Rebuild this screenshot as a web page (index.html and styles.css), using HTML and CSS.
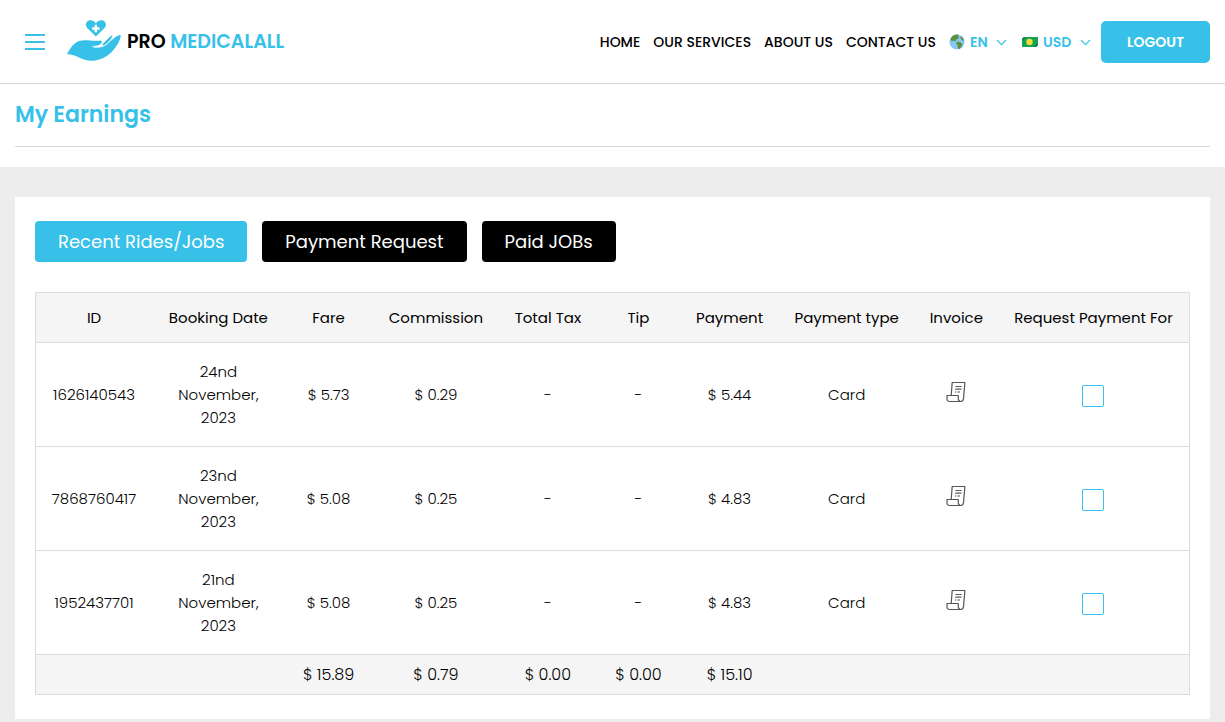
FILE: index.html
```
<!DOCTYPE html>
<html lang="en">
<head>
    <meta charset="UTF-8">
    <meta name="viewport" content="width=device-width, initial-scale=1.0">
    <title>My Earnings</title>
    <link rel="stylesheet" href="styles.css">
</head>
<body>
    <!-- icons used more than once -->
    <svg class="sprite" aria-hidden="true">
        <symbol id="icon-chevron" viewBox="0 0 10 7">
            <path d="M.5 1 5 5.600 9.500 1" fill="none" stroke="currentColor" stroke-width="1.2"/>
        </symbol>
        <symbol id="icon-invoice" viewBox="0 0 20 22">
            <path d="M5.200 14.500 6.200 1.500H18.900L17.500 17.500c-.2 2-1.100 3-2.700 3H3.700c-1.800 0-2.700-.9-2.700-2.500v-3.500h11.300v3.300c0 1.700.9 2.700 2.500 2.700" fill="none" stroke="currentColor" stroke-width="1.200" stroke-linejoin="round"/>
            <path d="M9.500 5.500h6M9.300 8.200h6M9 11h1.200M11.300 11h2.700" fill="none" stroke="currentColor" stroke-width="1.200"/>
        </symbol>
    </svg>

    <header class="header">
        <button class="menu-btn" aria-label="Menu"><span></span><span></span><span></span></button>
        <a class="logo" href="#">
            <svg class="logo-mark" viewBox="0 0 54 44" aria-hidden="true">
                <path d="M28.800 16.500 20.500 8.300C16.500 4 20.500-1 25 .5c2 .5 2.800 1.600 3.800 2.700 1-1.100 2-2.200 4-2.700 4.500-1.500 8.500 3.500 4.500 7.800z" fill="#38c1e8"/>
                <path d="M27.600 4.800h2.400v2.500h2.500v2.400h-2.500v2.500h-2.400V9.700h-2.500V7.300h2.500z" fill="#fff"/>
                <path d="M0 34C3 29 6 23 12 21c7-2.300 13 1 22-.6 2.500 1.600-.6 4.600-3.500 5.100l-5.500.8c5.500 1.700 11 .6 15-2.300C44.500 21 49 15 53.500 15c1 2-2 8.500-5.500 13-5 7-12 11.500-21 12.700C16 42 10 34.500 0 34z" fill="#38c1e8"/>
                <path d="M34.500 25c3-1.700 6.500-7.500 11-10-1 4.200-3 7.700-8 10.200z" fill="#38c1e8"/>
                <path d="M25.500 26.700c5.500 1.300 11 .2 14.800-3.200l6.500-6.800" fill="none" stroke="#fff" stroke-width="1"/>
            </svg>
            <span class="logo-text">PRO <span>MEDICALALL</span></span>
        </a>

        <nav class="nav">
            <a href="#">HOME</a>
            <a href="#">OUR SERVICES</a>
            <a href="#">ABOUT US</a>
            <a href="#">CONTACT US</a>
        </nav>
        <div class="pickers">
            <label class="picker">
                <svg class="globe" viewBox="0 0 16 16" aria-hidden="true">
                    <circle cx="8" cy="8" r="7.500" fill="#88c9f9"/>
                    <path d="M2 4C4 .8 7.500.2 9.500.800L9 2.500l1.500.5L8.500 5 7 5.500l-.5 2L4.500 6.500 3 7.200 1.500 6zM8 7.500l3 .5 2.500 2-1 2.500-2 2.500-1.500-.5L8.500 11 7 9.500zM12 2.300l2 1.700 1.200 3-1.700-.5-1.500-1.500-.8-1.500z" fill="#5c913b"/>
                </svg>
                <select aria-label="Language"><option>EN</option></select>
                <svg class="chevron"><use href="#icon-chevron"/></svg>
            </label>
            <label class="picker">
                <svg class="money" viewBox="0 0 16 10" aria-hidden="true">
                    <path d="M2 0h14v8l-2 2H0V2z" fill="#12a455"/>
                    <path d="M2 0h2L0 4V2zM16 6v2l-2 2h-2z" fill="#087d3d"/>
                    <circle cx="7.500" cy="5" r="3.200" fill="#fdd835"/>
                </svg>
                <select aria-label="Currency"><option>USD</option></select>
                <svg class="chevron"><use href="#icon-chevron"/></svg>
            </label>
        </div>
        <button class="logout-btn">LOGOUT</button>
    </header>

    <section class="page-title">
        <h1>My Earnings</h1>
    </section>

    <main class="content">
        <div class="panel">
            <div class="tabs">
                <button class="tab active">Recent Rides/Jobs</button>
                <button class="tab">Payment Request</button>
                <button class="tab">Paid JOBs</button>
            </div>

            <table class="earnings">
                <colgroup>
                    <col class="col-id">
                    <col class="col-date">
                    <col class="col-fare">
                    <col class="col-commission">
                    <col class="col-tax">
                    <col class="col-tip">
                    <col class="col-payment">
                    <col class="col-type">
                    <col class="col-invoice">
                    <col class="col-request">
                </colgroup>
                <thead>
                    <tr>
                        <th>ID</th>
                        <th>Booking Date</th>
                        <th>Fare</th>
                        <th>Commission</th>
                        <th>Total Tax</th>
                        <th>Tip</th>
                        <th>Payment</th>
                        <th>Payment type</th>
                        <th>Invoice</th>
                        <th>Request Payment For</th>
                    </tr>
                </thead>
                <tbody>
                    <tr>
                        <td>1626140543</td>
                        <td>24nd November, 2023</td>
                        <td>$ 5.73</td>
                        <td>$ 0.29</td>
                        <td>-</td>
                        <td>-</td>
                        <td>$ 5.44</td>
                        <td>Card</td>
                        <td><a class="invoice" href="#" aria-label="Invoice"><svg><use href="#icon-invoice"/></svg></a></td>
                        <td><input type="checkbox" aria-label="Request payment for 1626140543"></td>
                    </tr>
                    <tr>
                        <td>7868760417</td>
                        <td>23nd November, 2023</td>
                        <td>$ 5.08</td>
                        <td>$ 0.25</td>
                        <td>-</td>
                        <td>-</td>
                        <td>$ 4.83</td>
                        <td>Card</td>
                        <td><a class="invoice" href="#" aria-label="Invoice"><svg><use href="#icon-invoice"/></svg></a></td>
                        <td><input type="checkbox" aria-label="Request payment for 7868760417"></td>
                    </tr>
                    <tr>
                        <td>1952437701</td>
                        <td>21nd November, 2023</td>
                        <td>$ 5.08</td>
                        <td>$ 0.25</td>
                        <td>-</td>
                        <td>-</td>
                        <td>$ 4.83</td>
                        <td>Card</td>
                        <td><a class="invoice" href="#" aria-label="Invoice"><svg><use href="#icon-invoice"/></svg></a></td>
                        <td><input type="checkbox" aria-label="Request payment for 1952437701"></td>
                    </tr>
                </tbody>
                <tfoot>
                    <tr>
                        <td></td>
                        <td></td>
                        <td>$ 15.89</td>
                        <td>$ 0.79</td>
                        <td>$ 0.00</td>
                        <td>$ 0.00</td>
                        <td>$ 15.10</td>
                        <td></td>
                        <td></td>
                        <td></td>
                    </tr>
                </tfoot>
            </table>
        </div>
    </main>
</body>
</html>
```

FILE: styles.css
```
* {
    box-sizing: border-box;
}
body {
    margin: 0;
    font-family: Poppins, Inter, sans-serif;
    font-size: 15px;
    line-height: 23px;
    color: #000;
    background-color: #ededed;
}
a {
    color: inherit;
    text-decoration: none;
}
button, select {
    font-family: inherit;
    cursor: pointer;
}
.sprite {
    display: none;
}

/* Header */
.header {
    display: flex;
    align-items: center;
    padding: 21px 15px 20px 25px;
    background-color: #fff;
    border-bottom: 1px solid #d9d9d9;
}
.menu-btn {
    display: flex;
    flex-direction: column;
    gap: 5px;
    width: 20px;
    padding: 0;
    border: none;
    background: none;
}
.menu-btn span {
    height: 2px;
    background-color: #38c1e8;
}
.logo {
    display: flex;
    align-items: center;
    gap: 6px;
    height: 42px;
    margin-left: 22px;
}
.logo-mark {
    width: 54px;
    height: 44px;
}
.logo-text {
    padding-bottom: 2px;
    font-size: 19px;
    font-weight: 600;
}
.logo-text span {
    color: #38c1e8;
}
.nav {
    display: flex;
    gap: 13px;
    margin-left: auto;
    font-size: 14px;
    font-weight: 500;
}
.pickers {
    display: flex;
    gap: 15px;
    margin: 0 10px 0 13px;
}
.picker {
    display: flex;
    align-items: center;
    color: #38c1e8;
}
.picker select {
    appearance: none;
    padding: 0 0 0 5px;
    border: none;
    background: none;
    color: inherit;
    font-size: 14px;
    font-weight: 600;
}
.globe, .money {
    width: 16px;
    height: 16px;
}
.money {
    height: 10px;
}
.chevron {
    width: 11px;
    height: 7px;
    margin-left: 8px;
}
.logout-btn {
    width: 109px;
    height: 42px;
    border: none;
    border-radius: 5px;
    background-color: #38c1e8;
    color: #fff;
    font-size: 14px;
    font-weight: 600;
}

/* Page title */
.page-title {
    padding: 0 15px 20px;
    background-color: #fff;
}
.page-title h1 {
    margin: 0;
    padding: 16px 0;
    border-bottom: 1px solid #d9d9d9;
    color: #38c1e8;
    font-size: 22px;
    font-weight: 600;
    line-height: 30px;
}

/* Content */
.content {
    padding: 30px 15px 0;
}
.panel {
    padding: 24px 20px;
    background-color: #fff;
}
.tabs {
    display: flex;
    gap: 15px;
    margin-bottom: 30px;
}
.tab {
    padding: 9px 23px;
    border: none;
    border-radius: 4px;
    background-color: #000;
    color: #fff;
    font-size: 18px;
    line-height: 23px;
}
.tab.active {
    background-color: #38c1e8;
}

/* Earnings table */
.earnings {
    width: 100%;
    table-layout: fixed;
    border-collapse: collapse;
    border: 1px solid #dcdcdc;
    text-align: center;
}
.earnings tr {
    border-bottom: 1px solid #dcdcdc;
}
.earnings th {
    padding: 13px 0;
    font-weight: 400;
}
.earnings td {
    padding: 17px 15px;
    font-weight: 300;
}
.earnings thead, .earnings tfoot {
    background-color: #f5f5f5;
}
.earnings tfoot td {
    padding: 8px 0;
    font-size: 16px;
}
.col-id { width: 10.1%; }
.col-date { width: 11.5%; }
.col-fare { width: 7.6%; }
.col-commission { width: 11%; }
.col-tax { width: 8.4%; }
.col-tip { width: 7.3%; }
.col-payment { width: 8.5%; }
.col-type { width: 11.8%; }
.col-invoice { width: 7.2%; }
.col-request { width: 16.6%; }
.invoice svg {
    width: 20px;
    height: 22px;
    color: #555;
}
.earnings input {
    appearance: none;
    width: 22px;
    height: 22px;
    margin: 3px 0 0;
    border: 1px solid #38c1e8;
    border-radius: 2px;
    vertical-align: middle;
    cursor: pointer;
}
.earnings input:checked {
    background-color: #38c1e8;
}
```
